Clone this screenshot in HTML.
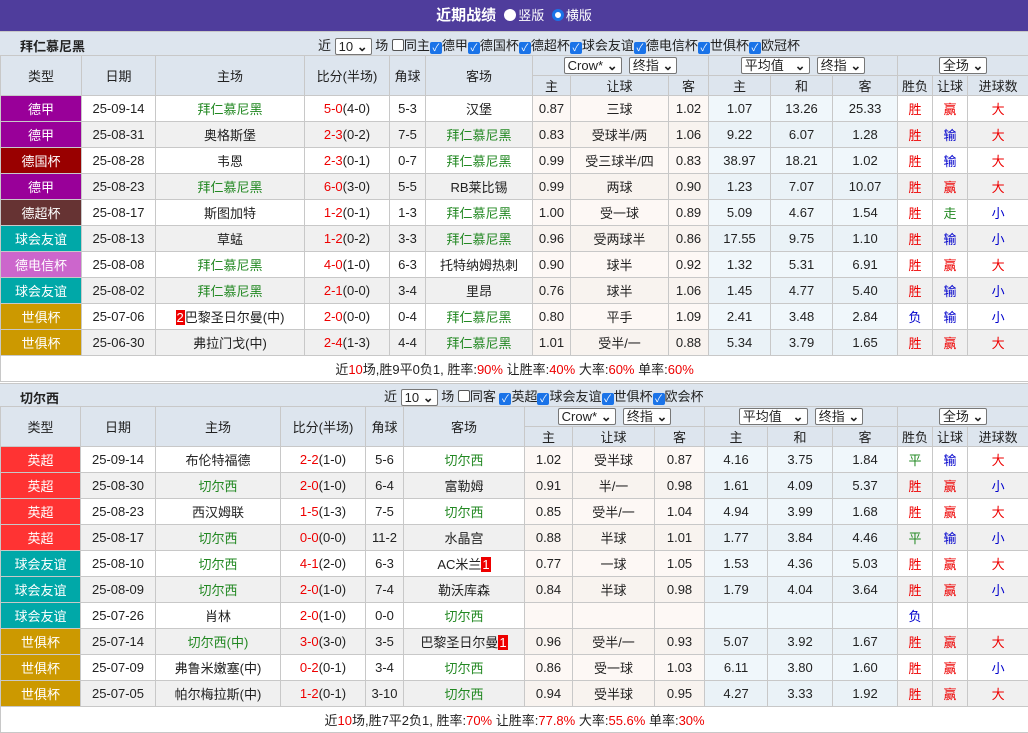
<!DOCTYPE html>
<html><head><meta charset="utf-8">
<style>
*{box-sizing:border-box;margin:0;padding:0}
body{width:1028px;height:733px;background:#fff;font-family:"Liberation Sans","Noto Sans CJK SC",sans-serif;font-size:13px;color:#222;overflow:hidden}
.title{height:31px;background:#4f3d9c;color:#fff;text-align:center;font-weight:bold;font-size:15px;line-height:31px}
.title span{font-weight:normal;font-size:13px}
.rad{display:inline-block;width:12px;height:12px;border-radius:50%;background:#fff;vertical-align:-1px;margin:0 2px 0 4px}
.rad.on{border:3px solid #1a73e8}
.sec{height:24px;background:#dde5ee;position:relative;border-top:1px solid #c8c8c8}
.sec .nm{position:absolute;left:20px;top:4px;font-weight:bold;font-size:13px}
.sec .ctl{position:absolute;top:3px;font-size:13px;white-space:nowrap}
.sel{display:inline-block;border:1px solid #777;background:#fff;padding:0 3px;height:17px;line-height:15px;font-size:13px;border-radius:2px;vertical-align:middle}
.sel:after{content:" ⌄";font-weight:bold}
.cb{display:inline-block;width:12px;height:12px;border:1px solid #555;border-radius:2px;vertical-align:-1px;background:#fff;margin:0}
.cb.on{background:#1a73e8;border-color:#1a73e8;color:#fff;font-size:10px;line-height:11px;text-align:center;font-style:normal}
table{border-collapse:collapse;table-layout:fixed;width:1028px}
td,th{border:1px solid #c8c8c8;text-align:center;white-space:nowrap;overflow:hidden;font-weight:normal}
th{background:#dde5ee;height:20px;font-size:13px}
td{height:26px}
tr.g td{background:#f0f0f0}
tr td.c{background:#fdf8f5}
tr td.b{background:#f0f7fb}
tr.g td.c{background:#f8f3ef}
tr.g td.b{background:#eaf2f7}
td.t{color:#fff}
.gr{color:#228822}.r{color:#e00}.bl{color:#00c}
.n{background:#e00;color:#fff;padding:0 1px}
.sum td{height:26px;background:#fff;font-size:13px}
</style></head><body>
<div class="title">近期战绩 <span><i class="rad"></i>竖版 <i class="rad on"></i>横版</span></div>

<div class="sec"><div class="nm">拜仁慕尼黑</div><div class="ctl" style="left:318px">近 <span class="sel">10</span> 场 <i class="cb"></i>同主<i class="cb on">✓</i>德甲<i class="cb on">✓</i>德国杯<i class="cb on">✓</i>德超杯<i class="cb on">✓</i>球会友谊<i class="cb on">✓</i>德电信杯<i class="cb on">✓</i>世俱杯<i class="cb on">✓</i>欧冠杯</div></div>
<table>
<colgroup><col style="width:81px"><col style="width:74px"><col style="width:149px"><col style="width:85px"><col style="width:36px"><col style="width:107px"><col style="width:38px"><col style="width:98px"><col style="width:40px"><col style="width:62px"><col style="width:62px"><col style="width:65px"><col style="width:35px"><col style="width:35px"><col style="width:61px"></colgroup>
<tr><th rowspan="2">类型</th><th rowspan="2">日期</th><th rowspan="2">主场</th><th rowspan="2">比分(半场)</th><th rowspan="2">角球</th><th rowspan="2">客场</th><th colspan="3"><span class="sel">Crow*</span> &nbsp;<span class="sel">终指</span></th><th colspan="3"><span class="sel">平均值 &nbsp;</span> &nbsp;<span class="sel">终指</span></th><th colspan="3"><span class="sel">全场</span></th></tr>
<tr><th>主</th><th>让球</th><th>客</th><th>主</th><th>和</th><th>客</th><th>胜负</th><th>让球</th><th>进球数</th></tr>
<tr><td class="t" style="background:#990099">德甲</td><td>25-09-14</td><td class="gr">拜仁慕尼黑</td><td><span class="r">5-0</span>(4-0)</td><td>5-3</td><td>汉堡</td><td class="c">0.87</td><td class="c">三球</td><td class="c">1.02</td><td class="b">1.07</td><td class="b">13.26</td><td class="b">25.33</td><td class="r">胜</td><td class="r">赢</td><td class="r">大</td></tr>
<tr class="g"><td class="t" style="background:#990099">德甲</td><td>25-08-31</td><td>奥格斯堡</td><td><span class="r">2-3</span>(0-2)</td><td>7-5</td><td class="gr">拜仁慕尼黑</td><td class="c">0.83</td><td class="c">受球半/两</td><td class="c">1.06</td><td class="b">9.22</td><td class="b">6.07</td><td class="b">1.28</td><td class="r">胜</td><td class="bl">输</td><td class="r">大</td></tr>
<tr><td class="t" style="background:#990000">德国杯</td><td>25-08-28</td><td>韦恩</td><td><span class="r">2-3</span>(0-1)</td><td>0-7</td><td class="gr">拜仁慕尼黑</td><td class="c">0.99</td><td class="c">受三球半/四</td><td class="c">0.83</td><td class="b">38.97</td><td class="b">18.21</td><td class="b">1.02</td><td class="r">胜</td><td class="bl">输</td><td class="r">大</td></tr>
<tr class="g"><td class="t" style="background:#990099">德甲</td><td>25-08-23</td><td class="gr">拜仁慕尼黑</td><td><span class="r">6-0</span>(3-0)</td><td>5-5</td><td>RB莱比锡</td><td class="c">0.99</td><td class="c">两球</td><td class="c">0.90</td><td class="b">1.23</td><td class="b">7.07</td><td class="b">10.07</td><td class="r">胜</td><td class="r">赢</td><td class="r">大</td></tr>
<tr><td class="t" style="background:#663333">德超杯</td><td>25-08-17</td><td>斯图加特</td><td><span class="r">1-2</span>(0-1)</td><td>1-3</td><td class="gr">拜仁慕尼黑</td><td class="c">1.00</td><td class="c">受一球</td><td class="c">0.89</td><td class="b">5.09</td><td class="b">4.67</td><td class="b">1.54</td><td class="r">胜</td><td class="gr">走</td><td class="bl">小</td></tr>
<tr class="g"><td class="t" style="background:#00a8a8">球会友谊</td><td>25-08-13</td><td>草蜢</td><td><span class="r">1-2</span>(0-2)</td><td>3-3</td><td class="gr">拜仁慕尼黑</td><td class="c">0.96</td><td class="c">受两球半</td><td class="c">0.86</td><td class="b">17.55</td><td class="b">9.75</td><td class="b">1.10</td><td class="r">胜</td><td class="bl">输</td><td class="bl">小</td></tr>
<tr><td class="t" style="background:#cc66cc">德电信杯</td><td>25-08-08</td><td class="gr">拜仁慕尼黑</td><td><span class="r">4-0</span>(1-0)</td><td>6-3</td><td>托特纳姆热刺</td><td class="c">0.90</td><td class="c">球半</td><td class="c">0.92</td><td class="b">1.32</td><td class="b">5.31</td><td class="b">6.91</td><td class="r">胜</td><td class="r">赢</td><td class="r">大</td></tr>
<tr class="g"><td class="t" style="background:#00a8a8">球会友谊</td><td>25-08-02</td><td class="gr">拜仁慕尼黑</td><td><span class="r">2-1</span>(0-0)</td><td>3-4</td><td>里昂</td><td class="c">0.76</td><td class="c">球半</td><td class="c">1.06</td><td class="b">1.45</td><td class="b">4.77</td><td class="b">5.40</td><td class="r">胜</td><td class="bl">输</td><td class="bl">小</td></tr>
<tr><td class="t" style="background:#cc9900">世俱杯</td><td>25-07-06</td><td><span class="n">2</span>巴黎圣日尔曼(中)</td><td><span class="r">2-0</span>(0-0)</td><td>0-4</td><td class="gr">拜仁慕尼黑</td><td class="c">0.80</td><td class="c">平手</td><td class="c">1.09</td><td class="b">2.41</td><td class="b">3.48</td><td class="b">2.84</td><td class="bl">负</td><td class="bl">输</td><td class="bl">小</td></tr>
<tr class="g"><td class="t" style="background:#cc9900">世俱杯</td><td>25-06-30</td><td>弗拉门戈(中)</td><td><span class="r">2-4</span>(1-3)</td><td>4-4</td><td class="gr">拜仁慕尼黑</td><td class="c">1.01</td><td class="c">受半/一</td><td class="c">0.88</td><td class="b">5.34</td><td class="b">3.79</td><td class="b">1.65</td><td class="r">胜</td><td class="r">赢</td><td class="r">大</td></tr>
<tr class="sum"><td colspan="15">近<span class="r">10</span>场,胜9平0负1, 胜率:<span class="r">90%</span> 让胜率:<span class="r">40%</span> 大率:<span class="r">60%</span> 单率:<span class="r">60%</span></td></tr>
</table>

<div class="sec" style="height:23px;margin-top:1px"><div class="nm">切尔西</div><div class="ctl" style="left:384px;top:2px">近 <span class="sel">10</span> 场 <i class="cb"></i>同客 <i class="cb on">✓</i>英超<i class="cb on">✓</i>球会友谊<i class="cb on">✓</i>世俱杯<i class="cb on">✓</i>欧会杯</div></div>
<table>
<colgroup><col style="width:80px"><col style="width:75px"><col style="width:125px"><col style="width:85px"><col style="width:38px"><col style="width:121px"><col style="width:48px"><col style="width:82px"><col style="width:50px"><col style="width:63px"><col style="width:65px"><col style="width:65px"><col style="width:35px"><col style="width:35px"><col style="width:61px"></colgroup>
<tr><th rowspan="2">类型</th><th rowspan="2">日期</th><th rowspan="2">主场</th><th rowspan="2">比分(半场)</th><th rowspan="2">角球</th><th rowspan="2">客场</th><th colspan="3"><span class="sel">Crow*</span> &nbsp;<span class="sel">终指</span></th><th colspan="3"><span class="sel">平均值 &nbsp;</span> &nbsp;<span class="sel">终指</span></th><th colspan="3"><span class="sel">全场</span></th></tr>
<tr><th>主</th><th>让球</th><th>客</th><th>主</th><th>和</th><th>客</th><th>胜负</th><th>让球</th><th>进球数</th></tr>
<tr><td class="t" style="background:#ff3333">英超</td><td>25-09-14</td><td>布伦特福德</td><td><span class="r">2-2</span>(1-0)</td><td>5-6</td><td class="gr">切尔西</td><td class="c">1.02</td><td class="c">受半球</td><td class="c">0.87</td><td class="b">4.16</td><td class="b">3.75</td><td class="b">1.84</td><td class="gr">平</td><td class="bl">输</td><td class="r">大</td></tr>
<tr class="g"><td class="t" style="background:#ff3333">英超</td><td>25-08-30</td><td class="gr">切尔西</td><td><span class="r">2-0</span>(1-0)</td><td>6-4</td><td>富勒姆</td><td class="c">0.91</td><td class="c">半/一</td><td class="c">0.98</td><td class="b">1.61</td><td class="b">4.09</td><td class="b">5.37</td><td class="r">胜</td><td class="r">赢</td><td class="bl">小</td></tr>
<tr><td class="t" style="background:#ff3333">英超</td><td>25-08-23</td><td>西汉姆联</td><td><span class="r">1-5</span>(1-3)</td><td>7-5</td><td class="gr">切尔西</td><td class="c">0.85</td><td class="c">受半/一</td><td class="c">1.04</td><td class="b">4.94</td><td class="b">3.99</td><td class="b">1.68</td><td class="r">胜</td><td class="r">赢</td><td class="r">大</td></tr>
<tr class="g"><td class="t" style="background:#ff3333">英超</td><td>25-08-17</td><td class="gr">切尔西</td><td><span class="r">0-0</span>(0-0)</td><td>11-2</td><td>水晶宫</td><td class="c">0.88</td><td class="c">半球</td><td class="c">1.01</td><td class="b">1.77</td><td class="b">3.84</td><td class="b">4.46</td><td class="gr">平</td><td class="bl">输</td><td class="bl">小</td></tr>
<tr><td class="t" style="background:#00a8a8">球会友谊</td><td>25-08-10</td><td class="gr">切尔西</td><td><span class="r">4-1</span>(2-0)</td><td>6-3</td><td>AC米兰<span class="n">1</span></td><td class="c">0.77</td><td class="c">一球</td><td class="c">1.05</td><td class="b">1.53</td><td class="b">4.36</td><td class="b">5.03</td><td class="r">胜</td><td class="r">赢</td><td class="r">大</td></tr>
<tr class="g"><td class="t" style="background:#00a8a8">球会友谊</td><td>25-08-09</td><td class="gr">切尔西</td><td><span class="r">2-0</span>(1-0)</td><td>7-4</td><td>勒沃库森</td><td class="c">0.84</td><td class="c">半球</td><td class="c">0.98</td><td class="b">1.79</td><td class="b">4.04</td><td class="b">3.64</td><td class="r">胜</td><td class="r">赢</td><td class="bl">小</td></tr>
<tr><td class="t" style="background:#00a8a8">球会友谊</td><td>25-07-26</td><td>肖林</td><td><span class="r">2-0</span>(1-0)</td><td>0-0</td><td class="gr">切尔西</td><td class="c"></td><td class="c"></td><td class="c"></td><td class="b"></td><td class="b"></td><td class="b"></td><td class="bl">负</td><td></td><td></td></tr>
<tr class="g"><td class="t" style="background:#cc9900">世俱杯</td><td>25-07-14</td><td class="gr">切尔西(中)</td><td><span class="r">3-0</span>(3-0)</td><td>3-5</td><td>巴黎圣日尔曼<span class="n">1</span></td><td class="c">0.96</td><td class="c">受半/一</td><td class="c">0.93</td><td class="b">5.07</td><td class="b">3.92</td><td class="b">1.67</td><td class="r">胜</td><td class="r">赢</td><td class="r">大</td></tr>
<tr><td class="t" style="background:#cc9900">世俱杯</td><td>25-07-09</td><td>弗鲁米嫩塞(中)</td><td><span class="r">0-2</span>(0-1)</td><td>3-4</td><td class="gr">切尔西</td><td class="c">0.86</td><td class="c">受一球</td><td class="c">1.03</td><td class="b">6.11</td><td class="b">3.80</td><td class="b">1.60</td><td class="r">胜</td><td class="r">赢</td><td class="bl">小</td></tr>
<tr class="g"><td class="t" style="background:#cc9900">世俱杯</td><td>25-07-05</td><td>帕尔梅拉斯(中)</td><td><span class="r">1-2</span>(0-1)</td><td>3-10</td><td class="gr">切尔西</td><td class="c">0.94</td><td class="c">受半球</td><td class="c">0.95</td><td class="b">4.27</td><td class="b">3.33</td><td class="b">1.92</td><td class="r">胜</td><td class="r">赢</td><td class="r">大</td></tr>
<tr class="sum"><td colspan="15">近<span class="r">10</span>场,胜7平2负1, 胜率:<span class="r">70%</span> 让胜率:<span class="r">77.8%</span> 大率:<span class="r">55.6%</span> 单率:<span class="r">30%</span></td></tr>
</table>
</body></html>
